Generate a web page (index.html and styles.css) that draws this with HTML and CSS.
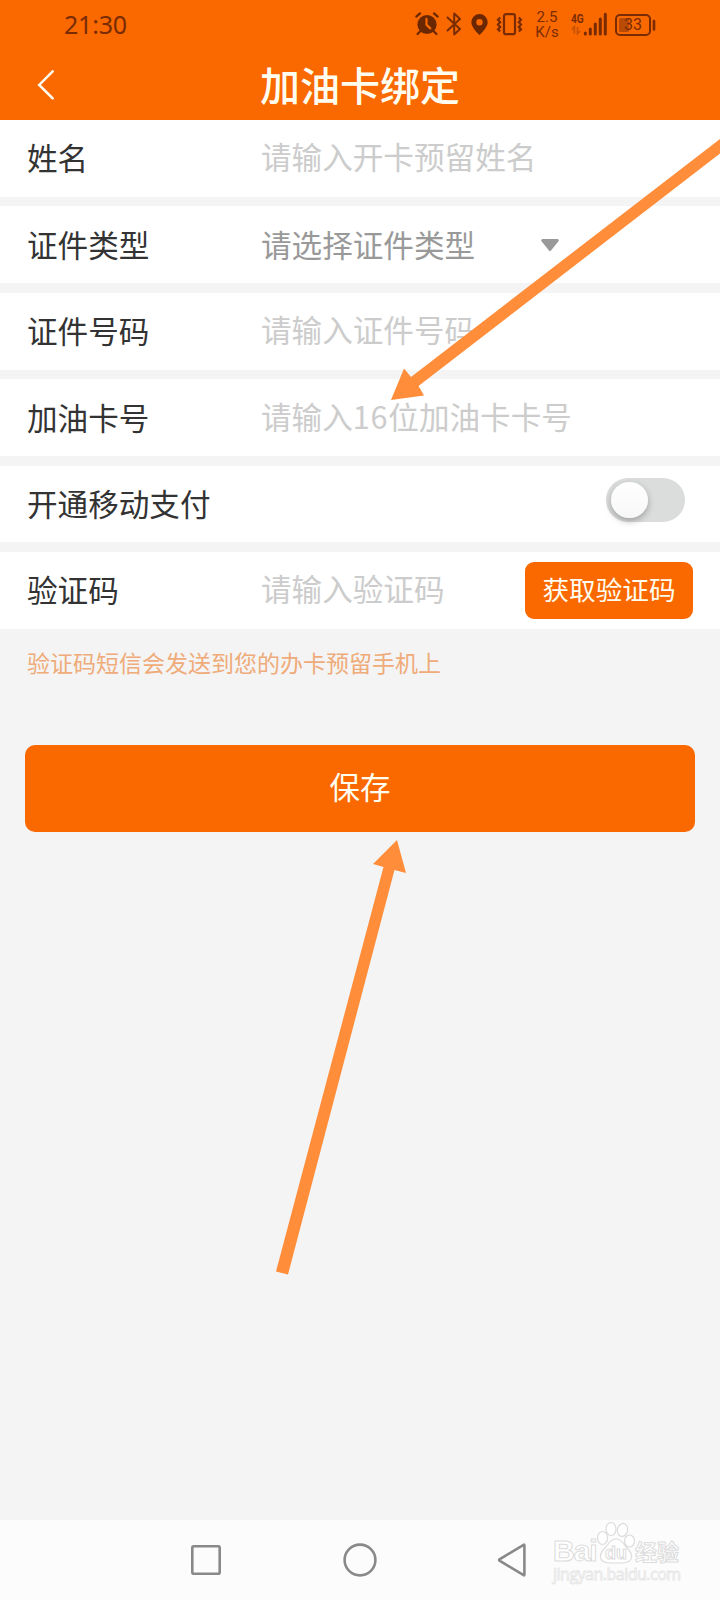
FILE: index.html
```html
<!DOCTYPE html>
<html lang="zh-CN">
<head>
<meta charset="utf-8">
<title>加油卡绑定</title>
<link rel="stylesheet" href="styles.css">
</head>
<body>
<div class="screen">
  <header class="header">
    <div class="status">
      <span class="clock">21:30</span>
      <div class="status-icons">
        <svg class="alarm" width="24" height="24" viewBox="0 0 24 24">
          <circle cx="12" cy="12.5" r="9.6" fill="currentColor"/>
          <path d="M1.3 4.6 5 1.4M22.7 4.6 19 1.4M5 19.5 2.6 22M19 19.5l2.4 2.5" stroke="currentColor" stroke-width="2.2" stroke-linecap="round"/>
          <path d="M11.5 6.8v6l3.8 3.6" fill="none" stroke="#fa6800" stroke-width="2.2" stroke-linecap="round"/>
        </svg>
        <svg class="bluetooth" width="16" height="24" viewBox="0 0 16 24">
          <path d="M1.5 5.5 14 17l-5.8 5.4V1.6L14 7 1.5 18.5" fill="none" stroke="currentColor" stroke-width="2" stroke-linejoin="round" stroke-linecap="round"/>
        </svg>
        <svg class="pin" width="17" height="21" viewBox="0 0 17 21">
          <path fill="currentColor" fill-rule="evenodd" d="M8.5 0A8.2 8.2 0 0 0 .3 8.2C.3 13.7 8.5 21 8.5 21s8.2-7.3 8.2-12.8A8.2 8.2 0 0 0 8.5 0Zm0 5a3.2 3.2 0 1 1 0 6.4 3.2 3.2 0 0 1 0-6.4Z"/>
        </svg>
        <svg class="vibrate" width="27" height="24" viewBox="0 0 27 24">
          <rect x="8" y="2.2" width="11" height="20" rx="2" fill="none" stroke="currentColor" stroke-width="2.2"/>
          <path d="M4.2 5.5 2 7.8l2.2 2.4L2 12.6 4.2 15 2 17.4l2.2 2M22.8 5.5 25 7.8l-2.2 2.4 2.2 2.4-2.2 2.4 2.2 2.4-2.2 2" fill="none" stroke="currentColor" stroke-width="2.2"/>
        </svg>
        <span class="speed"><span>2.5</span><span>K/s</span></span>
        <span class="signal">
          <span class="network">4G</span>
          <svg width="36" height="24" viewBox="0 0 36 24">
            <path d="M3.3 21.500v-6.500L1 17.500M6.500 15v6.500L9 19" fill="none" stroke="#c65206" stroke-width="1.700"/>
            <path d="M14.300 22v-1M19.300 22v-5M24.300 22v-10M29.300 22V7M34.300 22V2.200" stroke="currentColor" stroke-width="3" stroke-linecap="round"/>
          </svg>
        </span>
        <span class="battery">
          <svg width="41" height="22" viewBox="0 0 41 22">
            <rect x="4" y="4" width="10" height="14" rx="1.500" fill="#b94b05"/>
            <rect x="1" y="1" width="34" height="20" rx="4" fill="none" stroke="currentColor" stroke-width="2"/>
            <path d="M39 7v8.500" stroke="currentColor" stroke-width="2.600" stroke-linecap="round"/>
          </svg>
          <span class="level">33</span>
        </span>
      </div>
    </div>
    <div class="titlebar">
      <svg class="back" width="18" height="30" viewBox="0 0 18 30">
        <path d="M15.700 1.300 2.200 14.900l13.500 13.400" fill="none" stroke="currentColor" stroke-width="2.500" stroke-linecap="round"/>
      </svg>
      <h1 class="title">加油卡绑定</h1>
    </div>
  </header>

  <main class="form">
    <div class="row"><span class="label">姓名</span><span class="hint">请输入开卡预留姓名</span></div>
    <div class="row">
      <span class="label">证件类型</span><span class="hint select">请选择证件类型</span>
      <svg class="caret" width="18" height="13" viewBox="0 0 18 13"><path d="M1.500 0h15q2.200.8.800 2.500L10 11.600Q9 12.800 8 11.600L.700 2.500Q-.7.800 1.500 0Z" fill="#999"/></svg>
    </div>
    <div class="row"><span class="label">证件号码</span><span class="hint">请输入证件号码</span></div>
    <div class="row"><span class="label">加油卡号</span><span class="hint">请输入<span class="digits">16</span>位加油卡卡号</span></div>
    <div class="row"><span class="label">开通移动支付</span><span class="switch"><span class="knob"></span></span></div>
    <div class="row"><span class="label">验证码</span><span class="hint">请输入验证码</span><button class="code-button">获取验证码</button></div>
  </main>
  <p class="note">验证码短信会发送到您的办卡预留手机上</p>
  <button class="save">保存</button>

  <nav class="navbar">
    <svg width="30" height="30" viewBox="0 0 30 30"><rect x="1.300" y="1.300" width="27.400" height="27.400" rx="1.500"/></svg>
    <svg width="34" height="34" viewBox="0 0 34 34"><circle cx="17" cy="17" r="15.400"/></svg>
    <svg width="30" height="34" viewBox="0 0 30 34"><path d="M27.400 2.200v29.600q0 .8-.8.400L2.500 17.600q-.8-.6 0-1.200L26.600 1.800q.8-.4.800.4Z"/></svg>
  </nav>

  <svg class="arrows" width="720" height="1600" viewBox="0 0 720 1600">
    <path d="M391 400 404 368.500 411 377 720 139v14.500L418.500 386l5.500 9.500Z"/>
    <path d="M397 840 406 873l-11.500-3L288 1274.500l-12-3L383.500 867l-10.500-3Z"/>
  </svg>

  <div class="watermark">
    <div class="brand">
      <span class="bai">Bai</span>
      <span class="paw">
        <svg width="40" height="44" viewBox="0 0 40 44">
          <ellipse cx="6.500" cy="17" rx="5" ry="6.500"/><ellipse cx="15" cy="8" rx="5" ry="6.500"/>
          <ellipse cx="26.500" cy="9" rx="5" ry="6.500" transform="rotate(12 26.500 9)"/><ellipse cx="33.500" cy="20" rx="5" ry="6"/>
          <path d="M20 18c-6 0-7 5-11 9-4 4-6 7-4 11s7 4 15 4 13 0 15-4-1-8-4-11c-4-4-5-9-11-9Z"/>
        </svg>
        <span class="du">du</span>
      </span>
      <span class="jingyan">经验</span>
    </div>
    <div class="url">jingyan.baidu.com</div>
  </div>
</div>
</body>
</html>
```

FILE: styles.css
```css
* { box-sizing: border-box; }
body { margin: 0; font-family: "Noto Sans CJK SC", sans-serif; }
button { border: 0; font-family: inherit; color: #fffdf0; background: #fa6800; }
.screen { position: relative; display: flex; flex-direction: column; width: 720px; height: 1600px; overflow: hidden; background: #f4f4f4; }

.header { height: 120px; background: #fa6800; }
.status { display: flex; justify-content: space-between; height: 50px; padding: 0 64px 0 64px; color: #792c04; }
.clock { font: 25px/49px "Noto Sans", sans-serif; letter-spacing: -.2px; }
.status-icons { display: flex; align-items: flex-start; padding-top: 12px; }
.alarm { color: #6b2800; }
.bluetooth { margin-left: 7px; }
.pin { margin: 2px 0 0 9px; color: #6b2800; }
.vibrate { margin-left: 8px; }
.speed { display: flex; flex-direction: column; width: 24px; margin: -2px 0 0 12px; text-align: center; font: 15px/14.500px Roboto, sans-serif; }
.signal { position: relative; margin-left: 12px; }
.network { position: absolute; left: 0; top: 1px; font: 700 13px/11px "Roboto", sans-serif; transform: scaleX(.78); transform-origin: left; }
.signal svg { display: block; }
.battery { position: relative; margin: 2px 0 0 8px; }
.battery svg { display: block; }
.level { position: absolute; left: 1px; top: 0; width: 34px; text-align: center; font: 16px/22px Roboto, sans-serif; }

.titlebar { position: relative; display: flex; align-items: center; height: 70px; padding-left: 37px; color: #fffdf0; }
.back { margin-top: -1px; }
.title { flex: 1; margin: 0 55px 0 0; padding-bottom: 3px; text-align: center; font: 500 40px/50px "KaiTi", "STKaiti", "AR PL UKai CN", "Noto Sans CJK SC", sans-serif; }

.form { display: flex; flex-direction: column; gap: 9.6px; }
.row { display: flex; align-items: center; height: 76.8px; padding: 0 27px; background: #fff; font-size: 30.6px; line-height: 44px; white-space: nowrap; }
.label { width: 234px; padding-bottom: 2px; color: #333; }
.hint { padding-bottom: 4px; color: #ccc; }
.digits { letter-spacing: .8px; }
.hint.select { padding-bottom: 2px; color: #999; }
.caret { margin: 1px 0 0 66px; }
.switch { width: 79px; height: 44px; margin: -8px 8px 0 auto; padding: 4px 5px; border-radius: 22px; background: #dadddc; }
.knob { display: block; width: 37px; height: 36px; border-radius: 50%; background: linear-gradient(#fff, #f7f7f7); box-shadow: 0 3px 7px rgba(0, 0, 0, .28); }
.code-button { width: 168px; height: 57px; margin: 0 0 0 auto; padding: 0 0 3px; border-radius: 9px; font-size: 26.600px; line-height: 54px; }

.note { margin: 16px 27px 0; color: #efab79; font-size: 23px; line-height: 34px; }
.save { height: 87px; margin: 66px 25px 0; padding: 0 0 5px; border-radius: 10px; font-size: 30.500px; }

.navbar { display: flex; align-items: center; height: 80px; margin-top: auto; padding-left: 191px; background: #fcfcfc; }
.navbar svg { fill: none; stroke: #898989; stroke-width: 2.600; }
.navbar svg + svg { margin-left: 122px; }
.navbar svg + svg + svg { margin-left: 120px; }

.arrows { position: absolute; left: 0; top: 0; fill: #ff8d3a; }

.watermark { position: absolute; left: 553px; top: 1521px; color: #fff; -webkit-text-stroke: 1px #dcdcdc; }
.brand { display: flex; height: 46px; }
.bai { width: 43px; padding-top: 13px; font: 700 30px/34px "Liberation Sans", sans-serif; letter-spacing: -1px; }
.paw { position: relative; width: 39px; }
.paw svg { fill: #fff; stroke: #dcdcdc; stroke-width: 1.200; }
.du { position: absolute; left: 9px; top: 21px; font: 700 18px/22px "Liberation Sans", sans-serif; }
.jingyan { padding-top: 13px; font-weight: 700; font-size: 22px; line-height: 32px; white-space: nowrap; }
.url { font: 16px/20px "Open Sans", sans-serif; margin-top: -3px; -webkit-text-stroke: .8px #e5e5e5; white-space: nowrap; letter-spacing: -.5px; }
```
